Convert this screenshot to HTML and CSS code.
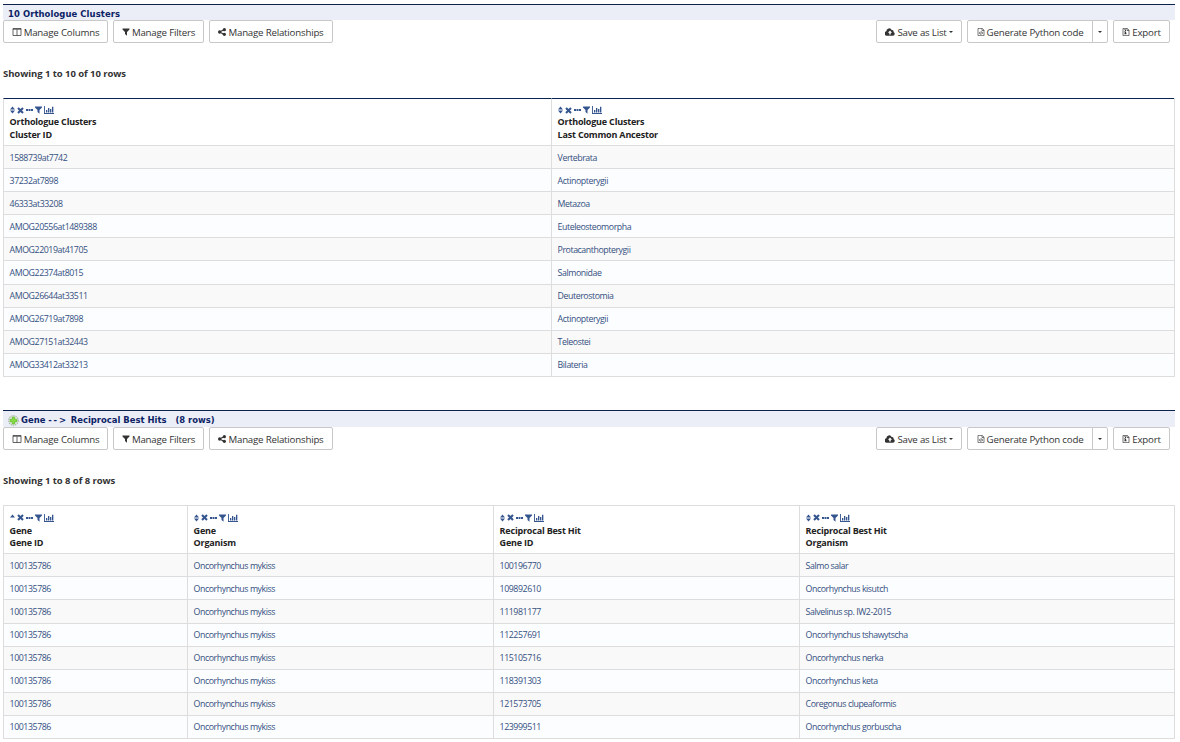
FILE: index.html
```
<!DOCTYPE html>
<html lang="en">
<head>
    <meta charset="UTF-8">
    <meta name="viewport" content="width=device-width, initial-scale=1.0">
    <title>Orthologue Clusters</title>
    <link rel="stylesheet" href="styles.css">
</head>
<body>
    <!-- icon sprite -->
    <svg class="sprite" width="0" height="0">
        <symbol id="i-columns" viewBox="0 0 18 16"><path d="M1 1h16v14H1zM1 2.500h16M9 3v12" fill="none" stroke="currentColor" stroke-width="1.500"/></symbol>
        <symbol id="i-filter" viewBox="0 0 14 16"><path d="M0 1h14v2L9 8v7.500L5 12V8L0 3z"/></symbol>
        <symbol id="i-share" viewBox="0 0 16 16"><path d="M3 8l10-5M3 8l10 5" fill="none" stroke="currentColor" stroke-width="2.200"/><circle cx="3.300" cy="8" r="3.300"/><circle cx="12.700" cy="3.300" r="3.300"/><circle cx="12.700" cy="12.700" r="3.300"/></symbol>
        <symbol id="i-cloud" viewBox="0 0 20 16"><path fill-rule="evenodd" d="M4.500 15.500A4.500 4.500 0 0 1 2.800 6.500 5.500 5.500 0 0 1 13.300 4 3 3 0 0 1 17 8a3.900 3.900 0 0 1-1 7.500zM10 5L5.800 9.500h2.700V13h3V9.500h2.700z"/></symbol>
        <symbol id="i-code" viewBox="0 0 14 16"><path d="M1 .8h8.500L13 4.300v11H1zM9 1v4h4M5.500 7.500L3.500 10l2 2.500M8.500 7.500l2 2.500-2 2.500M7.600 6.800l-1.200 6.500" fill="none" stroke="currentColor" stroke-width="1.300"/></symbol>
        <symbol id="i-archive" viewBox="0 0 14 16"><path d="M1 .8h8.500L13 4.300v11H1zM9 1v4h4" fill="none" stroke="currentColor" stroke-width="1.400"/><path d="M4 2h2v2H4zM5 4h2v2H5zM4 6h2v2H4zM4.500 8h2.500l1.200 4.500H3.800z"/></symbol>
        <symbol id="i-sort" viewBox="0 0 10 16"><path d="M5 1l5 6H0zM5 15l5-6H0z"/></symbol>
        <symbol id="i-up" viewBox="0 0 10 16"><path d="M5 1l5 6H0z"/></symbol>
        <symbol id="i-times" viewBox="0 0 14 14"><path d="M2 2l10 10M12 2L2 12" fill="none" stroke="currentColor" stroke-width="4.200"/></symbol>
        <symbol id="i-dots" viewBox="0 0 14 16"><path d="M0 6h4v4H0zM5 6h4v4H5zM10 6h4v4h-4z"/></symbol>
        <symbol id="i-chart" viewBox="0 0 20 16"><path d="M0 0h1.800v14H20v1.800H0zM4 8h2.700v5H4zM8 4h2.700v9H8zM12 6h2.700v7H12zM16 1.500h2.700V13H16z"/></symbol>
        <symbol id="i-plus" viewBox="0 0 16 16"><circle cx="8" cy="8" r="7" fill="#e4ebe2" stroke="#a3b3a1" stroke-width="1.500" stroke-dasharray="2 1.200"/><path d="M6.200 3h3.600v3.200H13v3.600H9.800V13H6.200V9.800H3V6.200h3.200z" fill="#85dd3f" stroke="#62b536"/></symbol>
    </svg>

    <div class="collection">
        <h3 class="title">10 Orthologue Clusters</h3>
        <div class="toolbar">
            <button class="btn b-columns"><svg class="icon w10"><use href="#i-columns"/></svg>Manage Columns</button>
            <button class="btn b-filters"><svg class="icon w8"><use href="#i-filter"/></svg>Manage Filters</button>
            <button class="btn b-relations"><svg class="icon w8"><use href="#i-share"/></svg>Manage Relationships</button>
            <div class="right">
                <button class="btn b-save"><svg class="icon w10"><use href="#i-cloud"/></svg>Save as List<span class="caret"></span></button>
                <div class="btn-group">
                    <button class="btn b-code"><svg class="icon w8"><use href="#i-code"/></svg>Generate Python code</button>
                    <button class="btn b-drop"><span class="caret"></span></button>
                </div>
                <button class="btn b-export"><svg class="icon w8"><use href="#i-archive"/></svg>Export</button>
            </div>
        </div>
        <div class="paging">Showing 1 to 10 of 10 rows</div>
        <table class="results clusters">
            <colgroup><col class="c-id"><col></colgroup>
            <thead>
                <tr>
                    <th><div class="tools"><svg class="t-sort"><use href="#i-sort"/></svg><svg class="t-x"><use href="#i-times"/></svg><svg class="t-dots"><use href="#i-dots"/></svg><svg class="t-filter"><use href="#i-filter"/></svg><svg class="t-chart"><use href="#i-chart"/></svg></div>Orthologue Clusters<br>Cluster ID</th>
                    <th><div class="tools"><svg class="t-sort"><use href="#i-sort"/></svg><svg class="t-x"><use href="#i-times"/></svg><svg class="t-dots"><use href="#i-dots"/></svg><svg class="t-filter"><use href="#i-filter"/></svg><svg class="t-chart"><use href="#i-chart"/></svg></div>Orthologue Clusters<br>Last Common Ancestor</th>
                </tr>
            </thead>
            <tbody>
                <tr><td>1588739at7742</td><td>Vertebrata</td></tr>
                <tr><td>37232at7898</td><td>Actinopterygii</td></tr>
                <tr><td>46333at33208</td><td>Metazoa</td></tr>
                <tr><td>AMOG20556at1489388</td><td>Euteleosteomorpha</td></tr>
                <tr><td>AMOG22019at41705</td><td>Protacanthopterygii</td></tr>
                <tr><td>AMOG22374at8015</td><td>Salmonidae</td></tr>
                <tr><td>AMOG26644at33511</td><td>Deuterostomia</td></tr>
                <tr><td>AMOG26719at7898</td><td>Actinopterygii</td></tr>
                <tr><td>AMOG27151at32443</td><td>Teleostei</td></tr>
                <tr><td>AMOG33412at33213</td><td>Bilateria</td></tr>
            </tbody>
        </table>
    </div>

    <div class="collection">
        <h3 class="title tall"><svg class="plus"><use href="#i-plus"/></svg>Gene <span class="arrow">--&gt;</span> Reciprocal Best Hits <span class="count">(8 rows)</span></h3>
        <div class="toolbar">
            <button class="btn b-columns"><svg class="icon w10"><use href="#i-columns"/></svg>Manage Columns</button>
            <button class="btn b-filters"><svg class="icon w8"><use href="#i-filter"/></svg>Manage Filters</button>
            <button class="btn b-relations"><svg class="icon w8"><use href="#i-share"/></svg>Manage Relationships</button>
            <div class="right">
                <button class="btn b-save"><svg class="icon w10"><use href="#i-cloud"/></svg>Save as List<span class="caret"></span></button>
                <div class="btn-group">
                    <button class="btn b-code"><svg class="icon w8"><use href="#i-code"/></svg>Generate Python code</button>
                    <button class="btn b-drop"><span class="caret"></span></button>
                </div>
                <button class="btn b-export"><svg class="icon w8"><use href="#i-archive"/></svg>Export</button>
            </div>
        </div>
        <div class="paging">Showing 1 to 8 of 8 rows</div>
        <table class="results hits">
            <colgroup><col class="c-gene"><col class="c-org"><col class="c-hit"><col></colgroup>
            <thead>
                <tr>
                    <th><div class="tools"><svg class="t-sort"><use href="#i-up"/></svg><svg class="t-x"><use href="#i-times"/></svg><svg class="t-dots"><use href="#i-dots"/></svg><svg class="t-filter"><use href="#i-filter"/></svg><svg class="t-chart"><use href="#i-chart"/></svg></div>Gene<br>Gene ID</th>
                    <th><div class="tools"><svg class="t-sort"><use href="#i-sort"/></svg><svg class="t-x"><use href="#i-times"/></svg><svg class="t-dots"><use href="#i-dots"/></svg><svg class="t-filter"><use href="#i-filter"/></svg><svg class="t-chart"><use href="#i-chart"/></svg></div>Gene<br>Organism</th>
                    <th><div class="tools"><svg class="t-sort"><use href="#i-sort"/></svg><svg class="t-x"><use href="#i-times"/></svg><svg class="t-dots"><use href="#i-dots"/></svg><svg class="t-filter"><use href="#i-filter"/></svg><svg class="t-chart"><use href="#i-chart"/></svg></div>Reciprocal Best Hit<br>Gene ID</th>
                    <th><div class="tools"><svg class="t-sort"><use href="#i-sort"/></svg><svg class="t-x"><use href="#i-times"/></svg><svg class="t-dots"><use href="#i-dots"/></svg><svg class="t-filter"><use href="#i-filter"/></svg><svg class="t-chart"><use href="#i-chart"/></svg></div>Reciprocal Best Hit<br>Organism</th>
                </tr>
            </thead>
            <tbody>
                <tr><td>100135786</td><td>Oncorhynchus mykiss</td><td>100196770</td><td>Salmo salar</td></tr>
                <tr><td>100135786</td><td>Oncorhynchus mykiss</td><td>109892610</td><td>Oncorhynchus kisutch</td></tr>
                <tr><td>100135786</td><td>Oncorhynchus mykiss</td><td>111981177</td><td>Salvelinus sp. IW2-2015</td></tr>
                <tr><td>100135786</td><td>Oncorhynchus mykiss</td><td>112257691</td><td>Oncorhynchus tshawytscha</td></tr>
                <tr><td>100135786</td><td>Oncorhynchus mykiss</td><td>115105716</td><td>Oncorhynchus nerka</td></tr>
                <tr><td>100135786</td><td>Oncorhynchus mykiss</td><td>118391303</td><td>Oncorhynchus keta</td></tr>
                <tr><td>100135786</td><td>Oncorhynchus mykiss</td><td>121573705</td><td>Coregonus clupeaformis</td></tr>
                <tr><td>100135786</td><td>Oncorhynchus mykiss</td><td>123999511</td><td>Oncorhynchus gorbuscha</td></tr>
            </tbody>
        </table>
    </div>
</body>
</html>
```
FILE: styles.css
```
* {
    box-sizing: border-box;
}
body {
    margin: 0;
    padding: 4px 5px 0 3px;
    background: #fff;
    color: #333;
    font-family: "Open Sans", sans-serif;
    font-size: 9.7px;
    letter-spacing: -0.2px;
    overflow: hidden;
}
svg {
    fill: currentColor;
    flex: none;
}
.sprite {
    display: block;
}
.collection {
    margin-bottom: 33px;
}
.title {
    display: flex;
    align-items: center;
    height: 16px;
    margin: 0;
    padding: 2px 5px 0;
    border-top: 1px solid #0c2350;
    background: #ebeef7;
    color: #0b2265;
    font-family: "DejaVu Sans Condensed", "DejaVu Sans", sans-serif;
    font-stretch: condensed;
    font-size: 9.4px;
    font-weight: bold;
    letter-spacing: 0.08px;
    white-space: pre;
}
.title.tall {
    height: 17px;
    letter-spacing: 0;
}
.plus {
    width: 11px;
    height: 11px;
    margin: 2px 2px 0 0;
}
.arrow {
    letter-spacing: 1.8px;
}
.count {
    margin-left: 6px;
}

/* toolbar */
.toolbar {
    display: flex;
    gap: 5px;
    padding-right: 5px;
}
.right {
    display: flex;
    gap: 5px;
    margin-left: auto;
}
.btn {
    display: flex;
    align-items: center;
    justify-content: center;
    gap: 2px;
    height: 23px;
    padding: 1px 0 0;
    border: 1px solid #c8c8c8;
    border-radius: 2px;
    background: #fff;
    color: #333;
    font: inherit;
    letter-spacing: inherit;
    white-space: nowrap;
}
.tall + .toolbar .btn {
    padding-top: 2px;
}
.icon {
    height: 8px;
}
.w10 { width: 10px; }
.w8 { width: 8px; }
.b-columns { width: 105px; }
.b-filters { width: 91px; }
.b-relations { width: 124px; }
.b-save { width: 86px; }
.b-code {
    width: 126px;
    border-radius: 2px 0 0 2px;
}
.b-drop {
    width: 16px;
    margin-left: -1px;
    border-radius: 0 2px 2px 0;
}
.b-export { width: 57px; }
.btn-group {
    display: flex;
}
.caret {
    border: 2px solid transparent;
    border-top-color: #333;
    border-bottom: 0;
}
.paging {
    height: 55px;
    padding-top: 24px;
    font-size: 9.5px;
    font-weight: bold;
    letter-spacing: -0.06px;
    line-height: 13px;
}

/* results */
.results {
    width: 1172px;
    table-layout: fixed;
    border-collapse: separate;
    border-spacing: 0;
    border: 1px solid #ddd;
    border-width: 0 1px 1px 0;
}
.c-id { width: 548px; }
.c-gene { width: 184px; }
.c-org, .c-hit { width: 306px; }
.results th,
.results td {
    padding: 0 0 0 5.6px;
    border: 1px solid #ddd;
    border-width: 1px 0 0 1px;
    text-align: left;
}
.results th {
    height: 47px;
    padding-top: 6px;
    color: #222;
    font-size: 9px;
    letter-spacing: -0.19px;
    line-height: 12.5px;
    vertical-align: top;
}
.clusters th {
    border-top-color: #0c2350;
}
.hits th {
    height: 48.3px;
    padding-top: 7px;
}
.results td {
    height: 23.1px;
    padding-top: 2px;
    color: #35507f;
    font-size: 8.8px;
    letter-spacing: -0.44px;
    line-height: 11px;
}
.results tbody tr:nth-child(odd) {
    background: #f9f9f9;
}
.results tbody tr:nth-child(even) {
    background: #fbfdff;
}
.tools {
    display: flex;
    align-items: center;
    height: 10px;
    margin-bottom: 1px;
    color: #35558f;
}
.hits .tools {
    margin-bottom: 2px;
}
.tools svg {
    height: 8px;
}
.tools .t-sort { width: 5px; margin-right: 2px; }
.tools .t-x { width: 7px; height: 7px; margin-right: 2px; }
.tools .t-dots { width: 7px; margin-right: 2px; }
.tools .t-filter { width: 7px; margin-right: 2px; }
.tools .t-chart { width: 10px; }
```
